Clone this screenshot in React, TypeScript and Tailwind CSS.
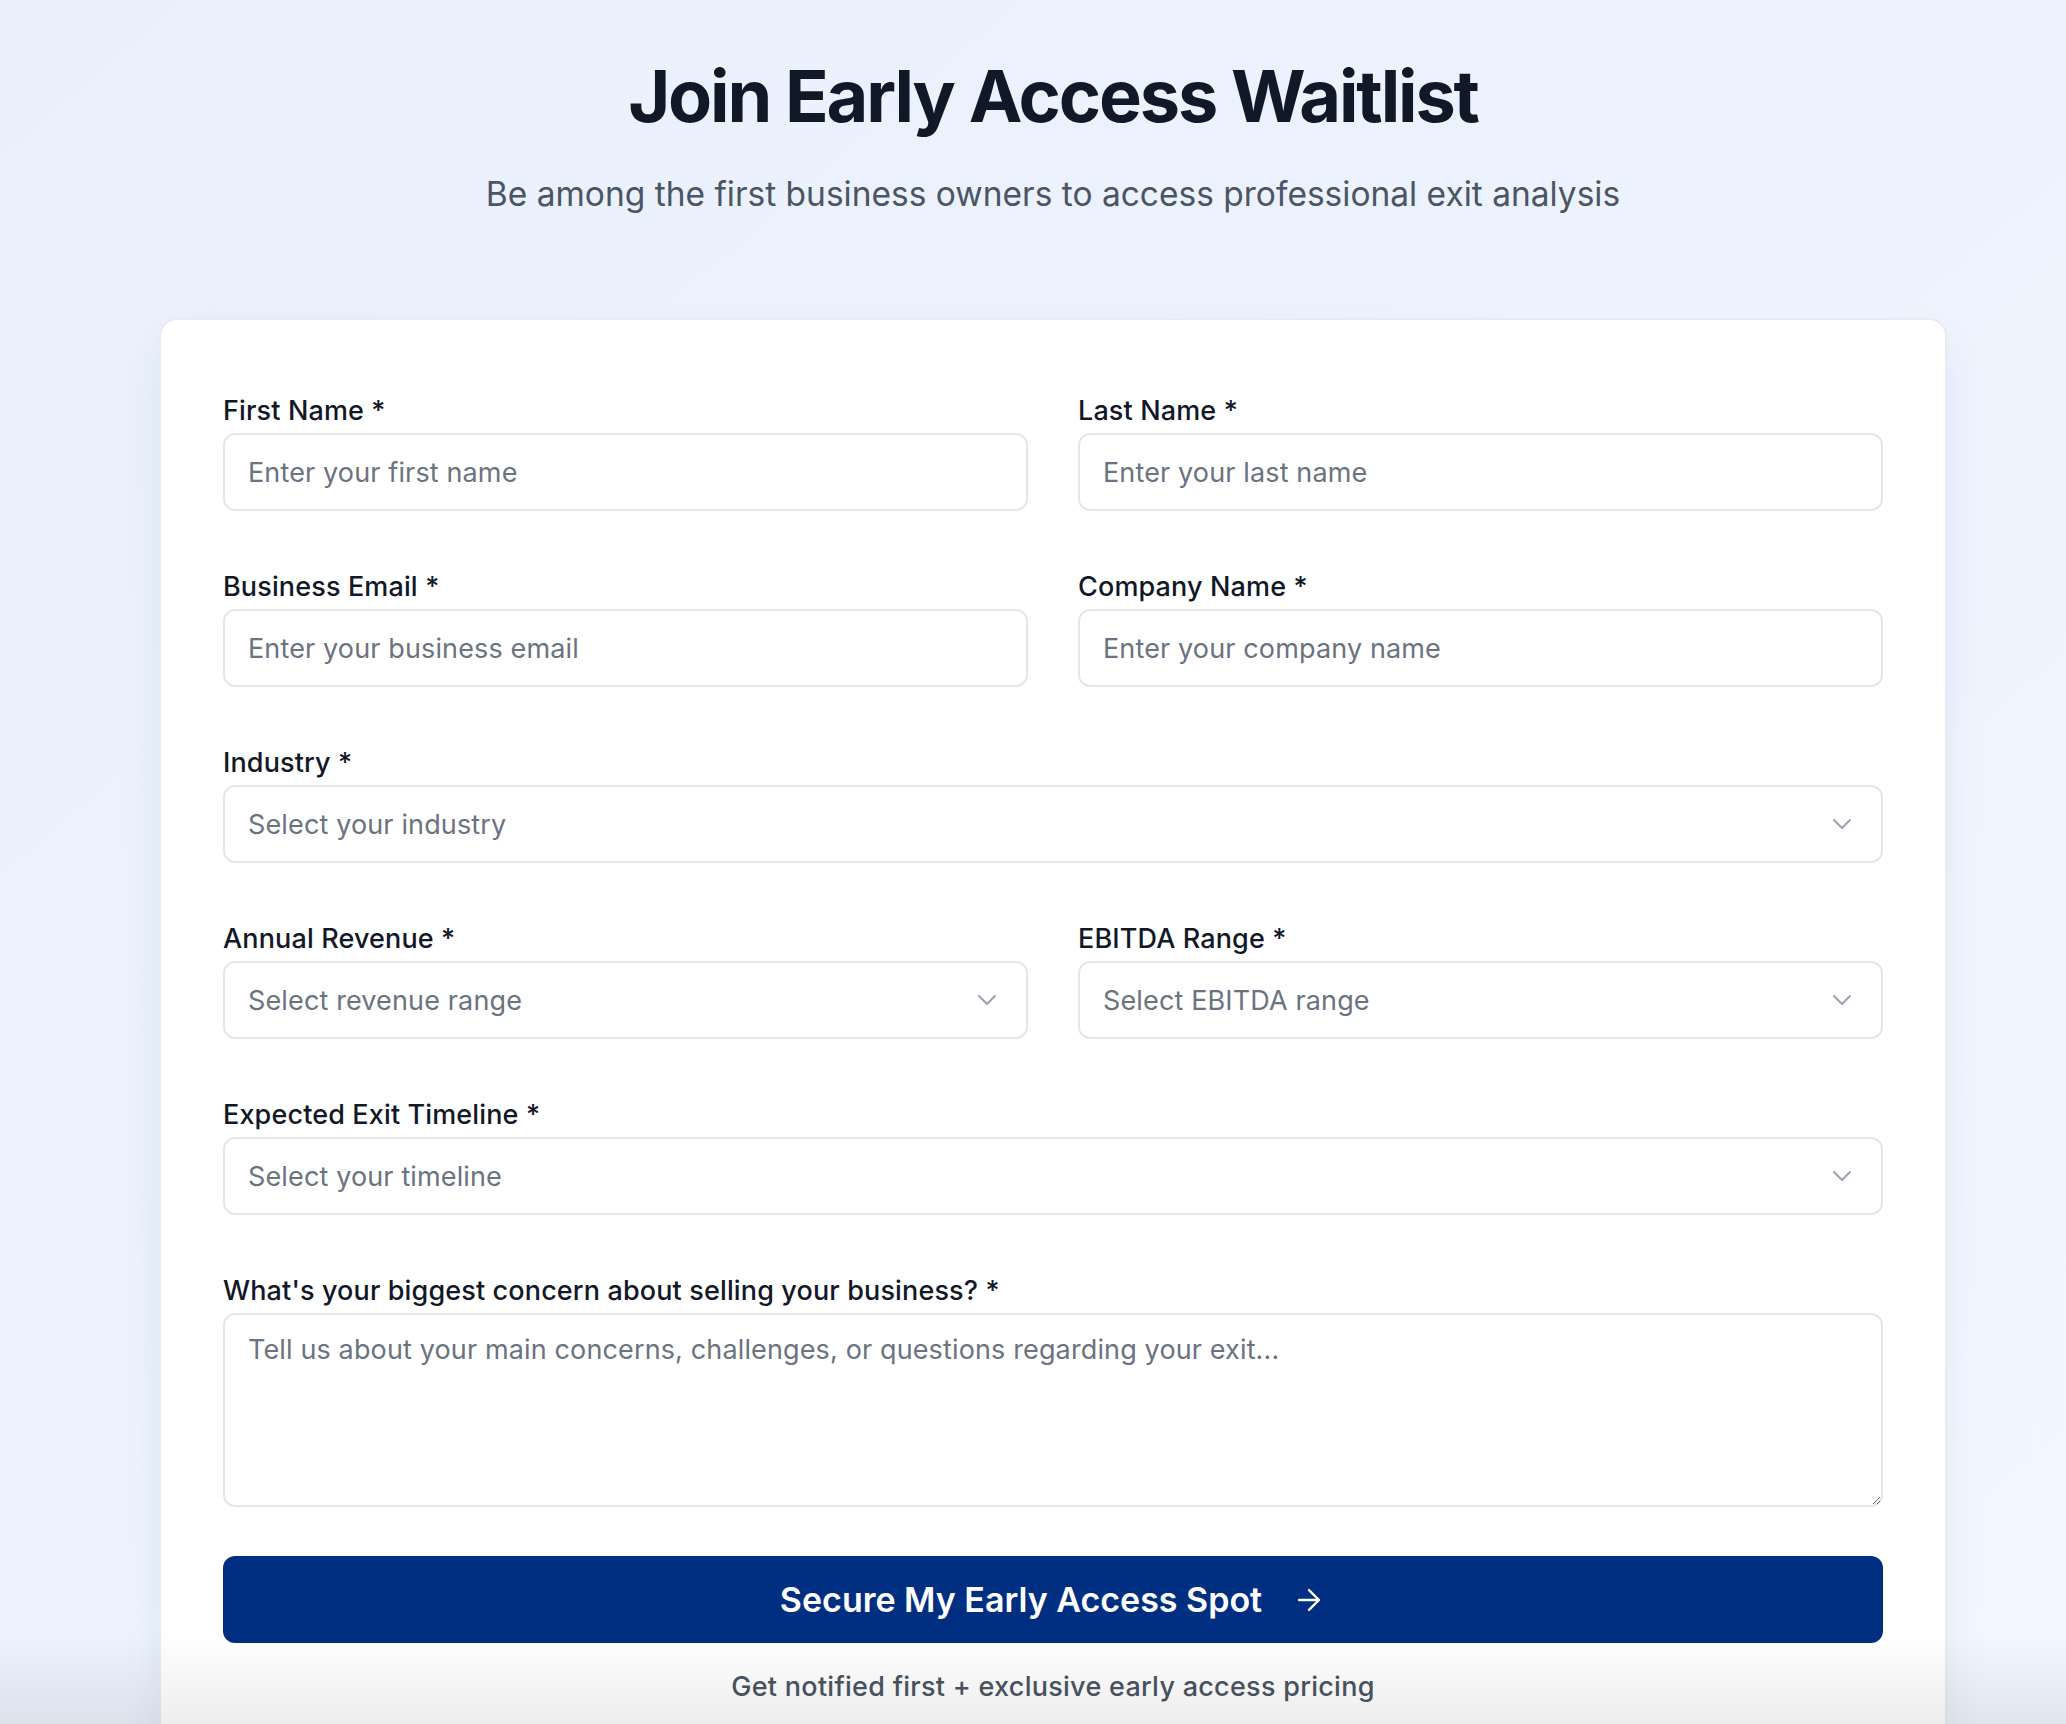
import { ArrowRight, ChevronDown } from 'lucide-react';

const font = { fontFamily: 'Inter, "Noto Sans", sans-serif' };

const fieldBase =
  'w-full h-[78px] rounded-[12px] border-2 border-[#e3e6eb] bg-white pl-[23px] pr-[23px] text-[27px] leading-[39px] tracking-[0.005em] placeholder:text-[#6b7280] outline-none';

function Label({ children }: { children: React.ReactNode }) {
  return (
    <label className="block mb-[4px] text-[27px] leading-[36px] tracking-[0.005em] font-medium text-[#111827]">
      {children}
    </label>
  );
}

function TextField({ label, placeholder }: { label: string; placeholder: string }) {
  return (
    <div>
      <Label>{label}</Label>
      <input type="text" placeholder={placeholder} className={fieldBase + ' text-gray-900'} />
    </div>
  );
}

function SelectField({ label, placeholder }: { label: string; placeholder: string }) {
  return (
    <div>
      <Label>{label}</Label>
      <div className="relative">
        <select defaultValue="" className={fieldBase + ' appearance-none text-[#6b7280] pr-[70px]'}>
          <option value="" disabled>
            {placeholder}
          </option>
        </select>
        <ChevronDown
          size={32}
          strokeWidth={1.5}
          className="absolute right-[25px] top-1/2 -translate-y-1/2 text-[#9ca3af] pointer-events-none"
        />
      </div>
    </div>
  );
}

export default function App() {
  return (
    <div
      className="min-h-screen bg-gradient-to-br from-[#e9f0fc] via-[#edf3fe] to-[#f3f7ff] pl-[40px]"
      style={font}
    >
      <div className="pt-[60px] text-center">
        <h1 className="text-[72px] leading-none font-bold text-[#111827] tracking-[-0.03em]">
          Join Early Access Waitlist
        </h1>
        <p className="mt-[38px] text-[33.5px] leading-[48px] text-[#4b5563]">
          Be among the first business owners to access professional exit analysis
        </p>
      </div>

      <div className="mx-auto mt-[100px] w-[1788px] rounded-[18px] border-2 border-[#e9ebef] bg-white px-[62px] pt-[73px] pb-[64px] shadow-[0_20px_50px_-12px_rgba(30,58,138,0.12)]">
        <form className="flex flex-col gap-[58px]" onSubmit={(e) => e.preventDefault()}>
          <div className="grid grid-cols-2 gap-x-[50px]">
            <TextField label="First Name *" placeholder="Enter your first name" />
            <TextField label="Last Name *" placeholder="Enter your last name" />
          </div>
          <div className="grid grid-cols-2 gap-x-[50px]">
            <TextField label="Business Email *" placeholder="Enter your business email" />
            <TextField label="Company Name *" placeholder="Enter your company name" />
          </div>
          <SelectField label="Industry *" placeholder="Select your industry" />
          <div className="grid grid-cols-2 gap-x-[50px]">
            <SelectField label="Annual Revenue *" placeholder="Select revenue range" />
            <SelectField label="EBITDA Range *" placeholder="Select EBITDA range" />
          </div>
          <SelectField label="Expected Exit Timeline *" placeholder="Select your timeline" />
          <div>
            <Label>What's your biggest concern about selling your business? *</Label>
            <textarea
              rows={4}
              placeholder="Tell us about your main concerns, challenges, or questions regarding your exit..."
              className="block w-full h-[194px] rounded-[12px] border-2 border-[#e3e6eb] bg-white px-[23px] pt-[15px] text-[27px] leading-[39px] tracking-[0.005em] text-gray-900 placeholder:text-[#6b7280] outline-none"
            />
          </div>
        </form>

        <button
          type="button"
          className="mt-[49px] flex h-[87px] w-full items-center justify-center gap-[30px] rounded-[12px] bg-[#002f82] text-[34px] font-semibold text-white"
        >
          Secure My Early Access Spot
          <ArrowRight size={34} strokeWidth={1.7} />
        </button>

        <p className="mt-[26px] text-center text-[27px] leading-[36px] tracking-[0.01em] font-medium text-[#4b5563]">
          Get notified first + exclusive early access pricing
        </p>
      </div>

      <div className="pointer-events-none fixed inset-x-0 bottom-0 h-[90px] bg-gradient-to-b from-transparent to-black/[0.07]" />
    </div>
  );
}
